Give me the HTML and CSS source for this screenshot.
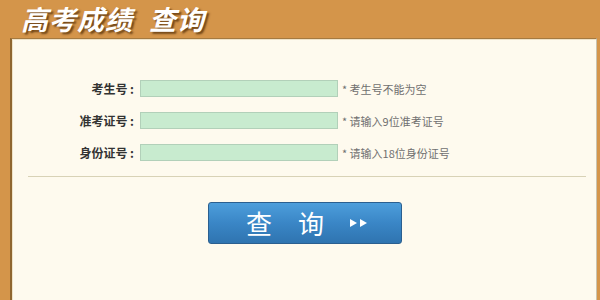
FILE: index.html
```html
<!DOCTYPE html>
<html lang="zh-CN">

<head>
    <meta charset="UTF-8">
    <title>高考成绩查询</title>
    <link rel="stylesheet" href="styles.css">
</head>

<body>
    <div class="page">
        <h1 class="title"><span>高考成绩</span><span class="title-end">查询</span></h1>
        <div class="panel">
            <form class="query-form" onsubmit="return false;">
                <div class="row">
                    <label for="ksh">考生号 :</label>
                    <input type="text" id="ksh">
                    <span class="hint">* 考生号不能为空</span>
                </div>
                <div class="row">
                    <label for="zkzh">准考证号 :</label>
                    <input type="text" id="zkzh">
                    <span class="hint">* 请输入9位准考证号</span>
                </div>
                <div class="row">
                    <label for="sfzh">身份证号 :</label>
                    <input type="text" id="sfzh">
                    <span class="hint">* 请输入18位身份证号</span>
                </div>
                <hr class="divider">
                <div class="actions">
                    <button type="submit" class="btn-query">
                        <span>查</span>
                        <span>询</span>
                        <svg class="arrows" width="20" height="10" viewBox="0 0 20 10">
                            <path d="M1 1 L8 5 L1 9 Z M11 1 L18 5 L11 9 Z" fill="#fff" />
                        </svg>
                    </button>
                </div>
            </form>
        </div>
    </div>
</body>

</html>
```

FILE: styles.css
```css
body {
    margin: 0;
    padding: 0;
    background-color: #d4954a;
    font-family: "Noto Sans CJK SC", "Liberation Sans", sans-serif;
}

.page {
    height: 300px;
    display: flex;
    flex-direction: column;
}

.title {
    margin: 0;
    height: 38px;
    padding-left: 21px;
    font-size: 27px;
    line-height: 38px;
    font-weight: bold;
    font-style: italic;
    color: #fff;
    letter-spacing: 1px;
    text-shadow: 2px 2px 2px rgba(70, 35, 0, 0.7);
    display: flex;
    align-items: center;
}

.title-end {
    margin-left: 16px;
}

.panel {
    flex: 1;
    margin-left: 10px;
    margin-right: 3px;
    background: #fefaee;
    border-left: 2px solid #8f6630;
    border-top: 1px solid #a57a40;
    border-right: 1px solid #c9c3b0;
    box-shadow: inset 1px 1px 0 #efe3c8;
}

.query-form {
    padding-top: 41px;
}

.row {
    display: flex;
    align-items: center;
    height: 17px;
    margin-bottom: 15px;
}

.row label {
    width: 128px;
    text-align: right;
    font-size: 12px;
    font-weight: bold;
    color: #333;
    padding-right: 6px;
    box-sizing: border-box;
    white-space: pre;
}

.row input {
    width: 198px;
    height: 17px;
    margin: 0;
    padding: 0 4px;
    box-sizing: border-box;
    background: #c8ebcf;
    border: 1px solid #b2d0b9;
    outline: none;
}

.hint {
    margin-left: 4px;
    font-size: 11px;
    color: #707070;
}

.divider {
    margin: 13px 10px 0 16px;
    border: 0;
    border-top: 1px solid #d8d2b6;
}

.actions {
    padding-top: 25px;
    padding-left: 196px;
}

.btn-query {
    display: flex;
    align-items: center;
    gap: 26px;
    width: 194px;
    height: 42px;
    padding: 0 0 0 37px;
    border: 1px solid #2b5f8f;
    border-radius: 3px;
    background: linear-gradient(#4d9edb, #3a86c6 50%, #2f74b0);
    color: #fff;
    font-family: "Noto Sans CJK SC", sans-serif;
    font-size: 26px;
    line-height: 40px;
    cursor: pointer;
}

.arrows {
    margin-left: -1px;
}
```
